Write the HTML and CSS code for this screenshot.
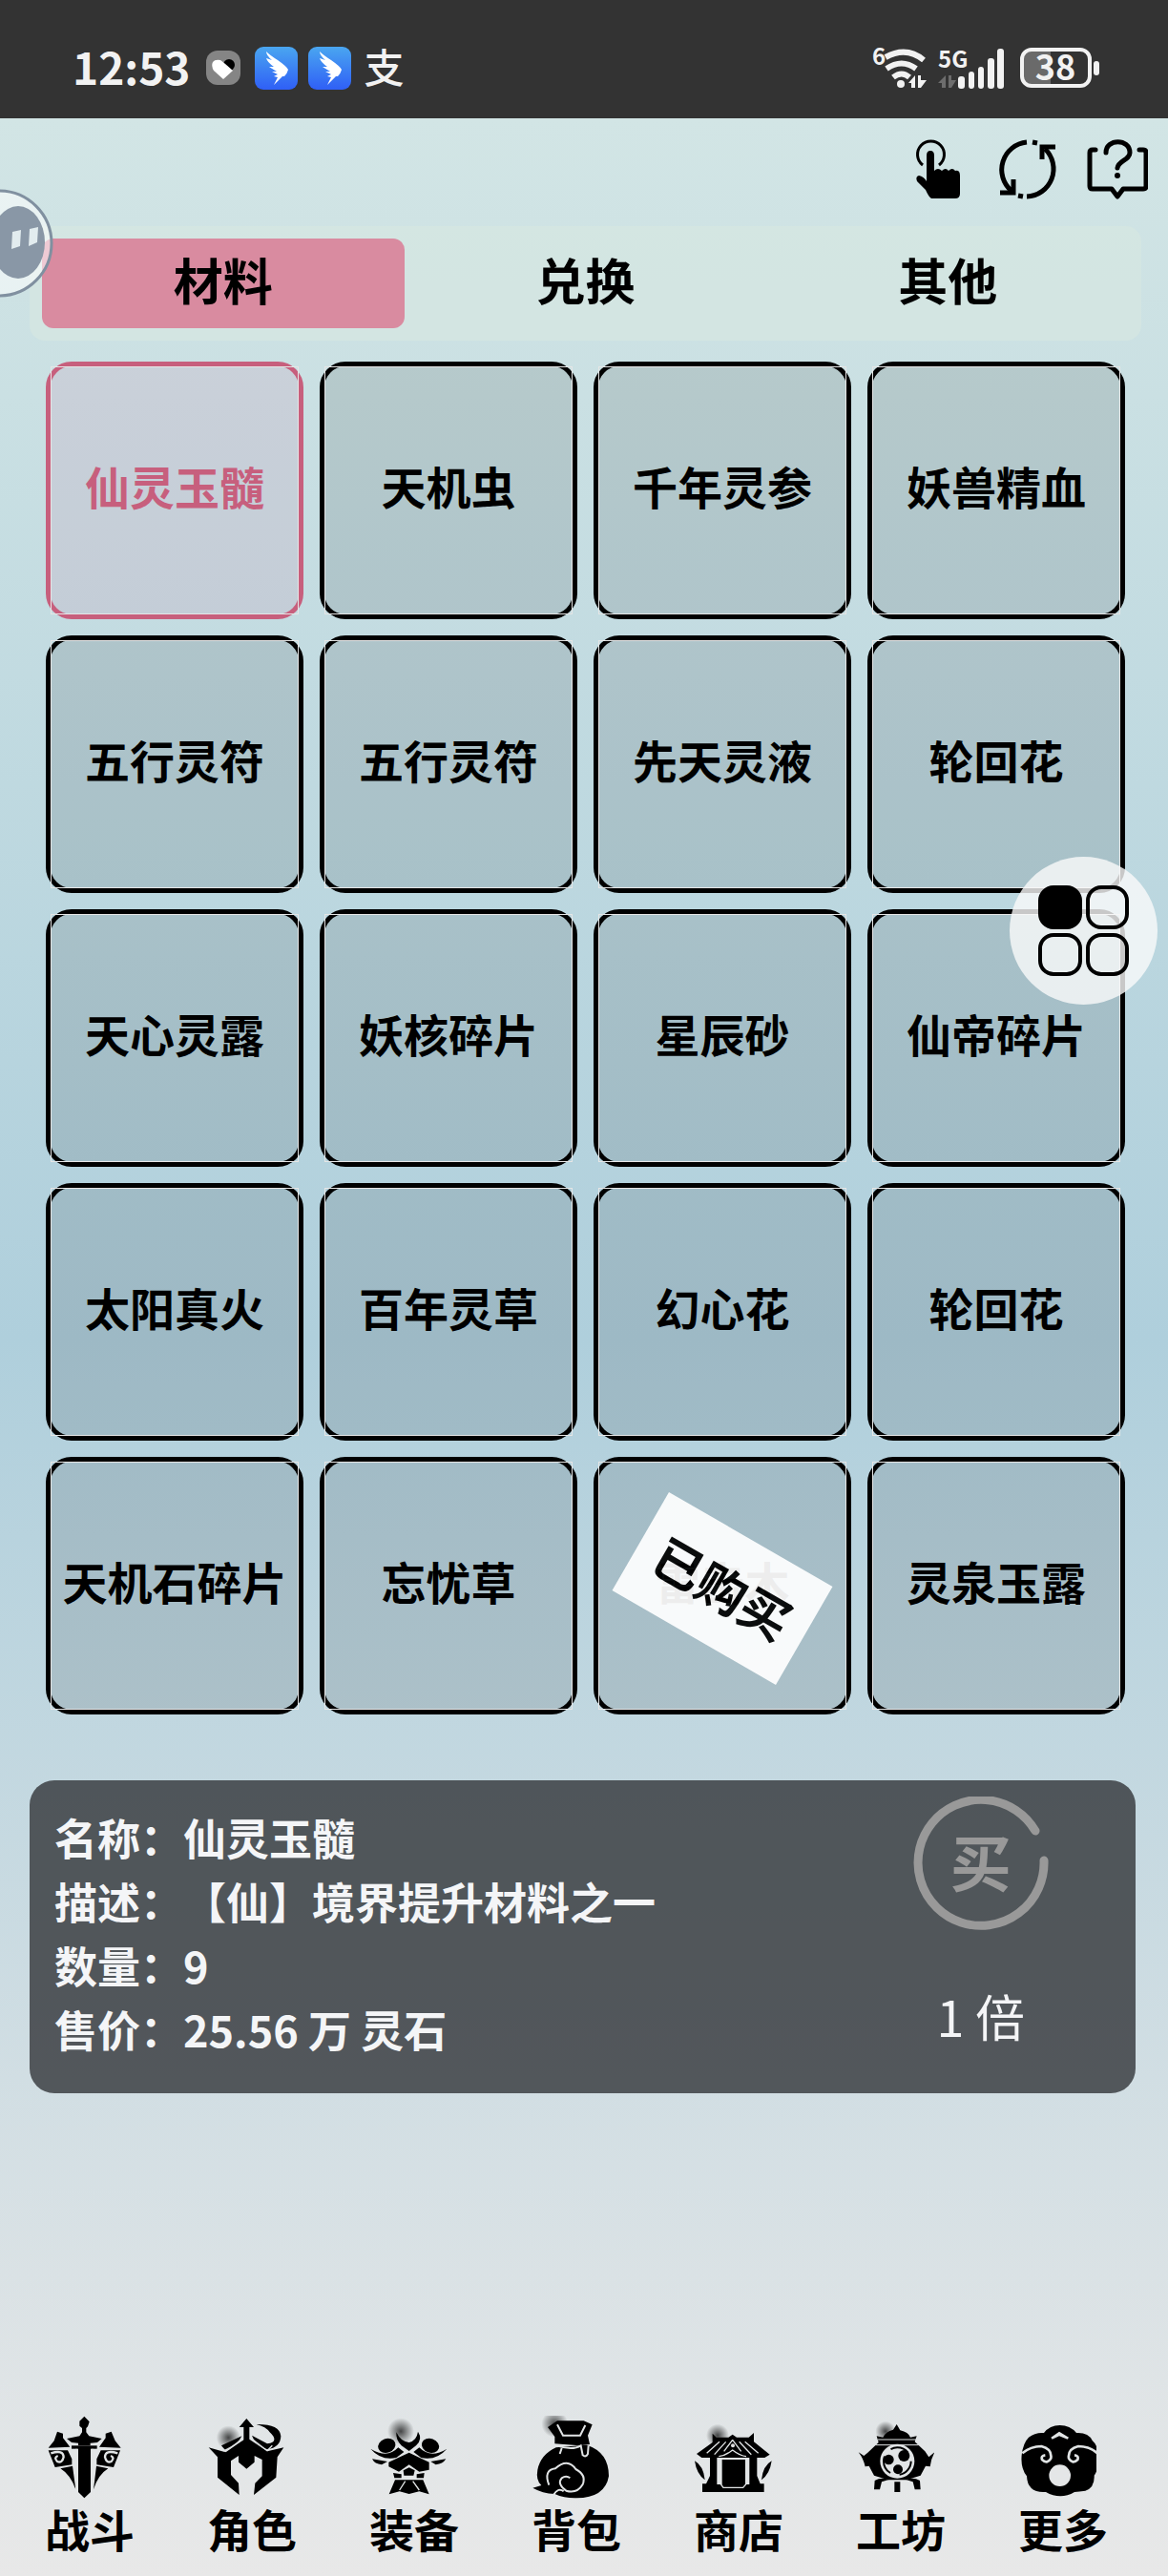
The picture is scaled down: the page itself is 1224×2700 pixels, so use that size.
FILE: index.html
```
<!DOCTYPE html>
<html lang="zh-CN">
<head>
    <meta charset="UTF-8">
    <meta name="viewport" content="width=device-width, initial-scale=1.0">
    <title>商店</title>
    <link rel="stylesheet" href="styles.css">
</head>
<body>

<header class="status-bar">
    <span class="time">12:53</span>
    <svg class="heart" viewBox="0 0 36 36" width="36" height="36">
        <rect width="36" height="36" rx="12" fill="#858585"/>
        <circle cx="24" cy="15" r="6" fill="#000"/>
        <path d="M7 12Q9 9 15 10Q18 12 28 21L18 30L8 21Q5 16 7 12Z" fill="#fff"/>
    </svg>
    <svg class="wing" viewBox="0 0 45 45" width="45" height="45">
        <defs>
            <linearGradient id="blue" x1="0" y1="0" x2="0" y2="1">
                <stop offset="0" stop-color="#4aa6f0"/>
                <stop offset="1" stop-color="#2f5ff6"/>
            </linearGradient>
        </defs>
        <rect width="45" height="45" rx="9" fill="url(#blue)"/>
        <path d="M12 5Q16 9 24 14Q34 21 35 24Q34 28 31 31L29 31L20 40L24 32L20 31L24 29L18 26L23 26L15 21L20 21Q13 16 12 12L18 14Q12 9 12 5Z" fill="#fff"/>
    </svg>
    <svg class="wing" viewBox="0 0 45 45" width="45" height="45">
        <rect width="45" height="45" rx="9" fill="url(#blue)"/>
        <path d="M12 5Q16 9 24 14Q34 21 35 24Q34 28 31 31L29 31L20 40L24 32L20 31L24 29L18 26L23 26L15 21L20 21Q13 16 12 12L18 14Q12 9 12 5Z" fill="#fff"/>
    </svg>
    <span class="pay">支</span>

    <div class="signals">
        <svg viewBox="0 -14 57 72" width="57" height="72">
            <text class="tiny" x="0" y="19">6</text>
            <g fill="none" stroke="#f2f2f2" stroke-width="6">
                <path d="M14 11Q36 -1 54 14"/>
                <path d="M15 23Q31 12 46 23"/>
                <path d="M22 32Q31 25 39 32"/>
            </g>
            <circle cx="30" cy="39" r="4" fill="#f2f2f2"/>
            <path d="M38 38L45 30V43H41V38ZM48 30H51V35H57L51 43H48Z" fill="#f2f2f2"/>
        </svg>
        <svg viewBox="0 -14 70 72" width="70" height="72">
            <text class="tiny" x="0" y="22">5G</text>
            <path d="M0 38L8 30V43H4V38ZM11 30H14V35H19L14 43H11Z" fill="#6d6d6d"/>
            <g fill="#f2f2f2">
                <rect x="21" y="31" width="7" height="13" rx="3"/>
                <rect x="32" y="26" width="6" height="18" rx="3"/>
                <rect x="42" y="21" width="6" height="23" rx="3"/>
                <rect x="52" y="12" width="7" height="32" rx="3"/>
                <rect x="62" y="2" width="7" height="42" rx="3"/>
            </g>
        </svg>
        <svg class="battery" viewBox="0 -14 84 70" width="84" height="70">
            <path d="M32 3V39H12Q3 39 3 30V12Q3 3 12 3Z" fill="#6a6a6a"/>
            <rect x="2" y="2" width="71" height="38" rx="10" fill="none" stroke="#f2f2f2" stroke-width="4"/>
            <rect x="77" y="14" width="6" height="15" rx="3" fill="#f2f2f2"/>
            <text class="level" x="37" y="34">38</text>
        </svg>
    </div>
</header>

<main class="page">
    <div class="tools">
        <button class="tool" aria-label="点击">
            <svg viewBox="0 0 64 64">
                <path d="M16 27A14 14 0 1 1 33 27" fill="none" stroke="#000" stroke-width="3"/>
                <path d="M20 17Q20 12 24 12Q28 12 28 17V33Q32 29 36 33Q40 29 43 33Q47 29 50 33Q55 32 55 38V57Q55 62 50 62H25Q22 60 19 53L10 44Q8 39 12 38Q17 39 20 44Z"/>
            </svg>
        </button>
        <button class="tool" aria-label="刷新">
            <svg viewBox="0 0 64 64" fill="none" stroke="#000" stroke-width="5">
                <path d="M31 3A29 29 0 0 0 15 54"/>
                <path d="M31 60A29 29 0 0 0 50 10"/>
                <path d="M61 8H47V21M3 56H17V42"/>
                <path d="M37 3L42 4M22 59L27 60"/>
            </svg>
        </button>
        <button class="tool" aria-label="帮助">
            <svg viewBox="0 0 64 64" fill="none" stroke="#000" stroke-width="5" stroke-linecap="round" stroke-linejoin="round">
                <path d="M9 11H6Q3 11 3 14V49Q3 52 6 52H26L32 60L38 52H59Q62 52 62 49V14Q62 11 59 11H55"/>
                <path d="M20 14C20 -1 45 -1 45 14C45 22 33 22 32 30"/>
                <circle cx="32" cy="38" r="3" fill="#000" stroke="none"/>
            </svg>
        </button>
    </div>

    <div class="tabs">
        <button class="tab active">材料</button>
        <button class="tab">兑换</button>
        <button class="tab">其他</button>
    </div>

    <div class="goods">
        <button class="item selected">仙灵玉髓</button>
        <button class="item">天机虫</button>
        <button class="item">千年灵参</button>
        <button class="item">妖兽精血</button>
        <button class="item">五行灵符</button>
        <button class="item">五行灵符</button>
        <button class="item">先天灵液</button>
        <button class="item">轮回花</button>
        <button class="item">天心灵露</button>
        <button class="item">妖核碎片</button>
        <button class="item">星辰砂</button>
        <button class="item">仙帝碎片</button>
        <button class="item">太阳真火</button>
        <button class="item">百年灵草</button>
        <button class="item">幻心花</button>
        <button class="item">轮回花</button>
        <button class="item">天机石碎片</button>
        <button class="item">忘忧草</button>
        <button class="item">雷击木<span class="sold">已购买</span></button>
        <button class="item">灵泉玉露</button>
    </div>

    <section class="detail">
        <div class="detail-text">
            <p>名称：仙灵玉髓</p>
            <p>描述：【仙】境界提升材料之一</p>
            <p>数量：9</p>
            <p>售价：25.56 万 灵石</p>
        </div>
        <div class="detail-buy">
            <button class="buy">
                <svg viewBox="0 0 144 140" fill="none" stroke="#999" stroke-linecap="round">
                    <path d="M129 36A66 66 0 1 0 138 67" stroke-width="9"/>
                </svg>
                <span>买</span>
            </button>
            <button class="times">1 倍</button>
        </div>
    </section>
</main>

<nav class="bottom-nav">
    <!-- 烟雾渐变，各图标共用 -->
    <a href="#" class="nav-item">
        <svg viewBox="141 96 246 264">
            <defs>
                <radialGradient id="smoke">
                    <stop offset="0" stop-color="#000" stop-opacity=".7"/>
                    <stop offset="1" stop-color="#000" stop-opacity="0"/>
                </radialGradient>
            </defs>
            <path d="M246 196H285V336L265 355L246 336Z"/>
            <path d="M265 98L281 115L276 130L271 135V148L280 160L320 168L306 180L284 182V190H246V182L225 180L210 168L250 160L258 148V135L250 128V113Z"/>
            <path d="M225 190H305V200H225Z"/>
            <path d="M180 146L198 152V166L220 194L152 197L170 175ZM350 146L332 152V166L312 194L380 197L362 175Z"/>
            <path d="M152 205H213L226 232V250L173 258ZM378 205H317L304 232V250L357 258Z"/>
            <path d="M190 262L228 254L238 328Q222 282 190 262ZM340 262L303 254L294 328Q308 282 340 262Z"/>
            <g class="line" stroke-width="7">
                <path d="M160 214Q200 202 200 226Q196 246 180 240Q168 228 182 222M370 214Q330 202 330 226Q334 246 350 240Q362 228 348 222"/>
                <path d="M240 200V330M291 200V330" stroke-width="4"/>
            </g>
        </svg>
        <span>战斗</span>
    </a>
    <a href="#" class="nav-item">
        <svg viewBox="651 96 246 264">
            <circle cx="718" cy="165" r="38" fill="url(#smoke)"/>
            <path d="M775 105L798 132H784V170L840 208L892 196L872 226L868 290L798 345L802 308L824 286V234L800 222V242L775 263L750 242V222L726 238V282L750 308L752 345L684 290V226L656 196L706 210L766 172V132H752Z"/>
            <path d="M696 190L760 160Q752 182 706 203ZM792 158L840 184Q880 178 848 148Q836 130 806 123Q880 122 883 160Q882 196 840 202Q800 186 792 158Z"/>
            <path class="line" d="M692 192L710 208L764 170M788 166L840 206L856 190" stroke-width="4"/>
        </svg>
        <span>角色</span>
    </a>
    <a href="#" class="nav-item">
        <svg viewBox="1161 96 246 264">
            <circle cx="1260" cy="145" r="42" fill="url(#smoke)"/>
            <path d="M1246 148Q1260 178 1286 180Q1310 174 1314 146Q1330 170 1308 190L1286 207L1262 190Q1244 172 1246 148Z"/>
            <ellipse cx="1216" cy="190" rx="28" ry="22" transform="rotate(-20 1216 190)"/>
            <ellipse cx="1353" cy="190" rx="28" ry="22" transform="rotate(20 1353 190)"/>
            <path d="M1165 200Q1218 232 1252 196L1270 210L1246 228Q1198 238 1165 200ZM1405 200Q1354 232 1318 196L1300 210L1324 228Q1372 238 1405 200ZM1170 232L1218 240L1200 250Q1178 248 1170 232ZM1402 232L1354 240L1370 250Q1392 248 1402 232Z"/>
            <path d="M1286 212L1349 242V266L1318 272L1286 250L1254 272L1222 256V242Z"/>
            <path d="M1236 276L1262 280V292H1240ZM1334 276L1310 280V292H1332ZM1268 268L1286 259L1304 268L1300 284H1270Z"/>
            <path d="M1242 298L1330 298L1349 343L1318 334L1286 342L1256 334L1223 343Z"/>
            <path class="line" d="M1274 302L1256 330M1298 302L1318 330" stroke-width="4"/>
        </svg>
        <span>装备</span>
    </a>
    <a href="#" class="nav-item">
        <svg viewBox="231 96 246 264">
            <circle cx="304" cy="122" r="42" fill="url(#smoke)"/>
            <path d="M282 132L312 112L395 112L422 124L408 158L414 186L382 190L304 184V162Z"/>
            <path d="M308 196L404 188Q474 210 474 286Q462 355 372 355Q335 356 304 342Q265 340 235 323L262 315Q244 298 250 266Q260 218 308 196Z"/>
            <g class="line" stroke-width="6">
                <path d="M312 124L330 158H384L400 126M310 190Q360 206 386 190L392 220Q402 228 408 216L410 190M326 198L320 216"/>
                <path d="M286 314Q268 266 306 262Q344 228 370 264Q404 282 392 312Q374 342 340 332Q310 310 326 292Q340 282 352 292M300 345Q316 320 332 334"/>
            </g>
        </svg>
        <span>背包</span>
    </a>
    <a href="#" class="nav-item">
        <svg viewBox="741 96 246 264">
            <circle cx="816" cy="158" r="36" fill="url(#smoke)"/>
            <path d="M800 152L812 164H850L863 155L876 164H914L930 150V178L980 218L964 228H766L750 216L800 180Z"/>
            <path d="M792 226H814V312H916V226H940V285L950 310H962V336H768V310H780L792 285ZM830 234H903V324H830Z"/>
            <path d="M744 238Q772 254 776 298Q750 280 744 238ZM986 238Q958 254 954 298Q980 280 986 238Z"/>
            <g class="line" stroke-width="4">
                <path d="M822 178L782 214M842 178L806 218M884 178L922 218M902 178L944 214M820 224Q840 222 863 204Q886 222 906 224M863 172L836 208M863 172L890 208"/>
                <path d="M822 232V306L834 322H896L910 306V232"/>
            </g>
            <circle cx="864" cy="190" r="6" fill="#ddd"/>
        </svg>
        <span>商店</span>
    </a>
    <a href="#" class="nav-item">
        <svg viewBox="111 96 246 264">
            <circle cx="204" cy="145" r="32" fill="url(#smoke)"/>
            <path d="M239 123L250 142Q276 148 282 164L302 160L296 178L328 208L340 226L358 211Q346 234 344 256L330 254L314 284L270 298H212L168 284L152 254L140 256Q134 230 119 211L136 222L148 212L182 180L176 160L196 164Q204 146 228 140Z"/>
            <path d="M170 300Q190 288 214 297L192 304L186 328H168ZM312 300Q292 288 268 297L290 304L296 328H314ZM232 304H250V336H232Z"/>
            <path class="line" d="M180 171H300M172 188H308" stroke-width="3"/>
            <circle cx="241" cy="239" r="54" fill="#e1e4e5"/>
            <circle class="ring" cx="241" cy="239" r="43"/>
            <g>
                <circle cx="214" cy="234" r="16"/>
                <circle cx="262" cy="222" r="18"/>
                <circle cx="243" cy="265" r="15"/>
            </g>
        </svg>
        <span>工坊</span>
    </a>
    <a href="#" class="nav-item">
        <svg viewBox="621 96 246 264">
            <path d="M702 150Q720 126 752 126Q784 126 804 150Q842 148 854 174Q870 188 872 214Q878 260 860 284Q862 322 832 332Q812 334 798 336Q754 362 708 336Q650 340 648 286Q628 260 632 220Q636 182 654 164Q674 148 702 150Z"/>
            <path class="line" d="M634 214Q660 192 694 192Q728 200 724 230Q712 250 696 234Q692 222 706 220M870 214Q846 192 810 192Q776 200 780 230Q792 250 808 234Q812 222 798 220" stroke-width="8"/>
            <path d="M750 146L780 164L776 170L750 160L728 170L724 164Z" fill="#e1e4e5"/>
            <circle cx="752" cy="284" r="34" fill="#e4e6e7"/>
        </svg>
        <span>更多</span>
    </a>
</nav>

<button class="float-menu" aria-label="菜单">
    <i class="on"></i><i></i><i></i><i></i>
</button>
<button class="float-robot" aria-label="助手">
    <svg viewBox="0 0 114 114">
        <circle cx="57" cy="57" r="55" fill="#fff" fill-opacity=".55" stroke="#8090a0" stroke-width="3"/>
        <ellipse cx="77" cy="56" rx="28" ry="38" fill="#8997a6"/>
        <path d="M71 45L80 43L79 60L70 63ZM89 42L98 40L97 56L88 60Z" fill="#e2ecef"/>
    </svg>
</button>

</body>
</html>
```

FILE: styles.css
```
* {
    box-sizing: border-box;
}
body {
    margin: 0;
    min-height: 100vh;
    display: flex;
    flex-direction: column;
    position: relative;
    overflow-x: hidden;
    font-family: "Noto Sans CJK SC", sans-serif;
    font-weight: 700;
    color: #000;
    text-spacing-trim: space-all;
    background: linear-gradient(#d2e5e5 124px, #afcfdc 52%, #e8e8e8);
}
button {
    margin: 0;
    padding: 0;
    border: none;
    background: none;
    color: inherit;
    font: inherit;
    cursor: pointer;
}
svg {
    display: block;
}

/* 状态栏 */
.status-bar {
    height: 124px;
    padding: 18px 71px 0 76px;
    display: flex;
    align-items: center;
    background: #333;
    color: #f2f2f2;
}
.time {
    padding-bottom: 4px;
    font-size: 46px;
    line-height: 60px;
}
.heart {
    margin-left: 16px;
}
.wing {
    margin-left: 11px;
}
.heart + .wing {
    margin-left: 15px;
}
.pay {
    margin-left: 14px;
    padding-bottom: 4px;
    font-size: 42px;
    font-weight: 500;
    line-height: 48px;
}
.signals {
    margin-left: auto;
    display: flex;
    align-items: center;
    gap: 12px;
}
.battery {
    margin-left: 4px;
}
.tiny {
    font-size: 24px;
    fill: #f2f2f2;
}
.level {
    font-size: 36px;
    text-anchor: middle;
    fill: #f2f2f2;
}

/* 顶部图标 */
.tools {
    display: flex;
    justify-content: flex-end;
    gap: 30px;
    padding: 22px 21px 0 0;
}
.tool {
    width: 64px;
    height: 64px;
}

/* 标签 */
.tabs {
    display: flex;
    margin: 27px 28px 22px 31px;
    padding: 13px;
    border-radius: 16px;
    background: rgba(214, 231, 225, .7);
}
.tab {
    flex: 1;
    height: 94px;
    padding-bottom: 10px;
    border-radius: 12px;
    font-size: 52px;
}
.tab.active {
    background: #d98ba0;
}

/* 商品 */
.goods {
    display: grid;
    grid-template-columns: repeat(4, 1fr);
    gap: 17px;
    margin: 0 45px 0 48px;
}
.item {
    position: relative;
    aspect-ratio: 1;
    padding-bottom: 12px;
    border: 5px solid #000;
    border-radius: 27px;
    background: rgba(0, 0, 0, .1);
    background-clip: padding-box;
    font-size: 47px;
    white-space: nowrap;
}
.item::before {
    content: "";
    position: absolute;
    inset: 0;
    border: 1px solid #e6e6e6;
}
.item.selected {
    color: #c75f7d;
    border-color: #c75f7d;
    background-color: rgba(200, 100, 150, .12);
}
.sold {
    position: absolute;
    top: 51%;
    left: 50%;
    width: 198px;
    height: 119px;
    line-height: 115px;
    background: #fff;
    font-size: 52px;
    opacity: .93;
    transform: translate(-50%, -50%) rotate(30deg);
}

/* 详情 */
.detail {
    display: flex;
    margin: 69px 34px 0 31px;
    border-radius: 26px;
    background: rgba(50, 53, 56, .8);
    color: #f4f5f7;
}
.detail-text {
    flex: 1;
    padding: 26px 0 34px 26px;
}
.detail-text p {
    margin: 0;
    font-size: 45px;
    line-height: 67px;
}
.detail-buy {
    width: 28%;
    padding-top: 17px;
    display: flex;
    flex-direction: column;
    align-items: center;
    gap: 60px;
}
.buy {
    display: grid;
    place-items: center;
    color: #999;
    font-size: 64px;
    line-height: 1;
}
.buy svg {
    width: 144px;
    height: 140px;
}
.buy svg,
.buy span {
    grid-area: 1 / 1;
}
.buy span {
    padding-bottom: 8px;
}
.times {
    font-size: 52px;
    font-weight: 400;
    line-height: 60px;
}

/* 底部导航 */
.bottom-nav {
    display: grid;
    grid-template-columns: repeat(7, 1fr);
    justify-items: center;
    margin-top: auto;
    padding: 0 25px 24px 9px;
}
.nav-item {
    color: #000;
    font-size: 47px;
    line-height: 52px;
    text-decoration: none;
}
.nav-item svg {
    width: 82px;
    height: 88px;
    margin-bottom: 4px;
}
.nav-item span {
    display: block;
}
.line {
    fill: none;
    stroke: #e1e4e5;
}
.ring {
    fill: none;
    stroke: #000;
    stroke-width: 6px;
    stroke-dasharray: 60 30;
}

/* 悬浮按钮 */
.float-menu {
    position: absolute;
    top: 898px;
    right: 11px;
    width: 155px;
    height: 155px;
    padding: 30px;
    border-radius: 50%;
    background: rgba(250, 250, 250, .8);
    display: grid;
    grid-template-columns: 1fr 1fr;
    gap: 4px;
}
.float-menu i {
    border: 4px solid #000;
    border-radius: 16px;
}
.float-menu .on {
    background: #000;
}
.float-robot {
    position: absolute;
    top: 198px;
    left: -58px;
    width: 114px;
    height: 114px;
}
```
